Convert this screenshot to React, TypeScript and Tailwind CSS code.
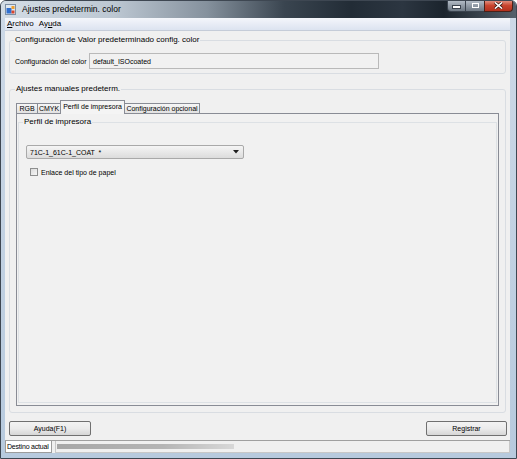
const tabs = [
  { label: "RGB", w: "w-[22px]", active: false },
  { label: "CMYK", w: "w-[24px]", active: false },
  { label: "Perfil de impresora", w: "w-[65px]", active: true },
  { label: "Configuración opcional", w: "w-[76px]", active: false },
];

const CaptionButtons = () => {
  return (
    <div className="ml-auto mr-[3px] self-start flex h-[12px] -mt-px">
      <div className="w-[19px] h-full rounded-bl-[4px] border border-t-0 border-[#3a434e] bg-gradient-to-b from-[#b9c2cc] to-[#6d7884] flex items-end justify-center pb-[3px]">
        <div className="w-[7px] h-[2px] bg-white border border-[#3a434e] box-content -mb-px" />
      </div>
      <div className="w-[18px] h-full border-b border-[#3a434e] bg-gradient-to-b from-[#b9c2cc] to-[#6d7884] flex items-center justify-center">
        <div className="w-[7px] h-[5px] border-[1.5px] border-white" />
      </div>
      <div className="w-[29px] h-full rounded-br-[4px] border border-t-0 border-[#4a2119] bg-gradient-to-b from-[#e59a8b] via-[#c9452f] to-[#b3311d] flex items-center justify-center">
        <svg width="9" height="7" viewBox="0 0 9 7">
          <path d="M1 0.5 L8 6.5 M8 0.5 L1 6.5" stroke="#3b1a14" strokeWidth="3" />
          <path d="M1 0.5 L8 6.5 M8 0.5 L1 6.5" stroke="#ffffff" strokeWidth="1.6" />
        </svg>
      </div>
    </div>
  );
};

const App = () => {
  return (
    <div className="w-[517px] h-[459px] flex flex-col overflow-hidden rounded-t-[6px] border border-[#3e4752] bg-gradient-to-b from-[#cdd9e7] to-[#b7cade] font-['Liberation_Sans',Arial,sans-serif] text-black">
      {/* title bar */}
      <div className="h-[17px] shrink-0 flex items-center pl-[4px] bg-[linear-gradient(to_right,#d3dce5_0%,#bcc7d2_22%,#85919d_40%,#3a4550_55%,#222c36_68%,#2c3641_78%,#1b242d_86%,#55606b_100%)]">
        <svg width="11" height="11" viewBox="0 0 11 11" className="shrink-0">
          <rect x="0.5" y="0.5" width="10" height="10" fill="#dfe7ef" stroke="#7d8ea3" />
          <rect x="1.5" y="4" width="5" height="5.5" fill="#2f6fd0" />
          <rect x="6.5" y="6.5" width="3" height="3" fill="#d9442c" />
          <rect x="6.5" y="2" width="3" height="3" fill="#f0a030" />
        </svg>
        <span className="ml-[6px] text-[8.5px] leading-none text-black">Ajustes predetermin. color</span>
        <CaptionButtons />
      </div>

      <div className="flex-1 flex pl-[4px] pr-[6px] pb-[5px]">
        <div className="flex-1 flex flex-col bg-[#f0f0f0]">
          {/* menu */}
          <div className="h-[13px] shrink-0 flex items-center gap-[5px] pl-[2px] text-[8px] leading-none bg-gradient-to-b from-[#f4f6fb] to-[#dce3f0] border-b border-[#c5ccd8]">
            <span>
              <span className="underline">A</span>rchivo
            </span>
            <span>
              Ay<span className="underline">u</span>da
            </span>
          </div>

          <div className="flex-1 flex flex-col px-[4px] pt-[4px]">
            {/* config. color */}
            <fieldset className="border border-[#d9dde2] rounded-[3px] pl-[5px] pb-[4px]">
              <legend className="-ml-[1px] px-[1px] text-[8px] leading-[10px]">
                Configuración de Valor predeterminado config. color
              </legend>
              <div className="mt-[8px] flex items-center">
                <span className="w-[74px] text-[7px] leading-none whitespace-nowrap">Configuración del color</span>
                <div className="w-[290px] h-[16px] border border-[#b9b9b9] bg-[#f1f1f1] flex items-center pl-[3px] text-[7px] leading-none">
                  default_ISOcoated
                </div>
              </div>
            </fieldset>

            {/* manual settings */}
            <fieldset className="mt-[10px] flex-1 flex flex-col border border-[#d9dde2] rounded-[3px] px-[6px] pb-[6px]">
              <legend className="ml-[-1px] px-[1px] text-[8px] leading-[10px]">Ajustes manuales predeterm.</legend>
              <div className="mt-[6px] h-[13px] flex items-end">
                {tabs.map((tab, i) =>
                  tab.active ? (
                    <div
                      key={i}
                      className={`${tab.w} relative z-10 -ml-px -mb-px h-[14px] border border-b-0 border-[#898c95] bg-[#f4f4f4] flex items-start justify-center pt-[2px] text-[7px] leading-none whitespace-nowrap`}
                    >
                      {tab.label}
                    </div>
                  ) : (
                    <div
                      key={i}
                      className={`${tab.w} ${i === 0 ? "" : "-ml-px"} h-[10px] border border-b-0 border-[#898c95] bg-gradient-to-b from-[#f6f6f6] to-[#e2e2e2] flex items-center justify-center text-[7px] leading-none whitespace-nowrap`}
                    >
                      {tab.label}
                    </div>
                  )
                )}
              </div>
              <div className="flex-1 flex flex-col border border-[#898c95] bg-[#f1f1f1] pt-[3px] px-[1px] pb-[2px]">
                <fieldset className="flex-1 flex flex-col border border-[#dde1e5] pl-[4px]">
                  <legend className="px-[1px] text-[8px] leading-[10px]">Perfil de impresora</legend>
                  <div className="mt-[18px] ml-[3px] w-[218px] h-[14px] rounded-[2px] border border-[#a9a9a9] bg-gradient-to-b from-[#f5f5f5] to-[#dcdcdc] flex items-center pl-[3px] pr-[4px] text-[7px] leading-none">
                    <span className="whitespace-pre">71C-1_61C-1_COAT  *</span>
                    <svg width="6" height="4" viewBox="0 0 6 4" className="ml-auto">
                      <path d="M0 0 H6 L3 3.5 Z" fill="#1e1e1e" />
                    </svg>
                  </div>
                  <div className="mt-[9px] ml-[7px] flex items-center">
                    <div className="w-[8px] h-[8px] border border-[#8e8f8f] bg-gradient-to-br from-[#dcdcdc] to-[#f7f7f7]" />
                    <span className="ml-[3px] text-[7px] leading-none">Enlace del tipo de papel</span>
                  </div>
                </fieldset>
              </div>
            </fieldset>

            {/* buttons */}
            <div className="mt-[8px] h-[15px] flex justify-between shrink-0">
              <button className="w-[82px] h-full rounded-[2px] border border-[#707070] bg-gradient-to-b from-[#f3f3f3] via-[#ebebeb] to-[#d6d6d6] text-[7px] leading-none">
                Ayuda(F1)
              </button>
              <button className="w-[81px] -mr-px h-full rounded-[2px] border border-[#707070] bg-gradient-to-b from-[#f3f3f3] via-[#ebebeb] to-[#d6d6d6] text-[7px] leading-none">
                Registrar
              </button>
            </div>
          </div>

          {/* status bar */}
          <div className="mt-[4px] h-[13px] shrink-0 flex gap-[3px] border-t border-[#a0a0a0] bg-[#f0f0f0]">
            <div className="w-[47px] h-full border border-t-0 border-[#9c9c9c] bg-white flex items-center pl-[1px] text-[7px] leading-none whitespace-nowrap tracking-[-0.2px] overflow-hidden">
              Destino actual
            </div>
            <div className="flex-1 h-full border border-t-0 border-[#c8c8c8] flex items-center pl-[1px]">
              <div className="w-[177px] h-[5px] bg-[linear-gradient(to_right,#a7a7a7_0%,#b5b5b5_60%,#d8d8d8_100%)] blur-[0.6px]" />
            </div>
          </div>
        </div>
      </div>
    </div>
  );
};

export default App;
